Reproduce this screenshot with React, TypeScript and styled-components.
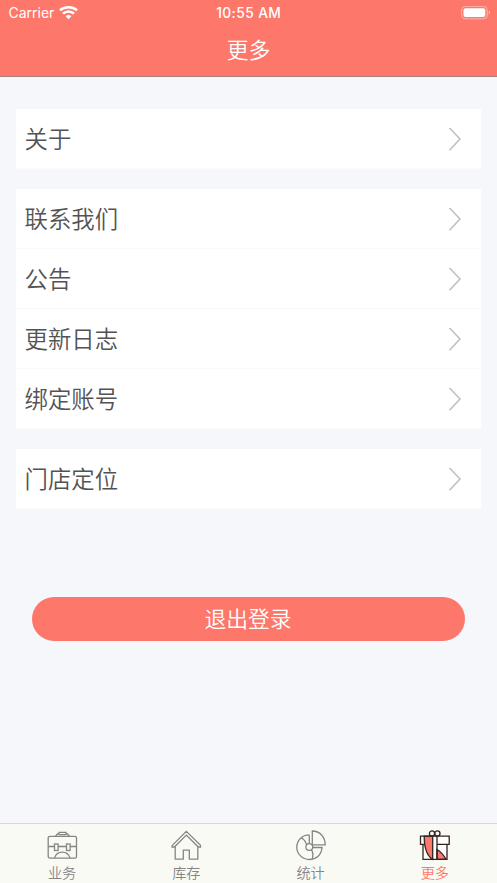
import React from "react";
import styled, { createGlobalStyle } from "styled-components";

const Global = createGlobalStyle`
  * { box-sizing: border-box; }
  body { margin: 0; background: #f5f7fb; font-family: Inter, "Noto Sans CJK SC", sans-serif; }
`;

const Screen = styled.div`
  height: 883px;
  display: flex;
  flex-direction: column;
  background: #f5f7fb;
  overflow: hidden;
`;

const Header = styled.header`
  height: 77px;
  flex: none;
  background: #fe776b;
  border-bottom: 1px solid #a8827f;
  color: #fff;
`;

const StatusBar = styled.div`
  height: 26px;
  display: grid;
  grid-template-columns: 1fr auto 1fr;
  align-items: center;
  padding: 0 6px 0 8.5px;
  font-size: 14px;
  line-height: 26px;
`;

const Carrier = styled.div`
  display: flex;
  align-items: center;
  gap: 5px;
`;

const Time = styled.div`
  margin-right: 2px;
  font-size: 13.8px;
  font-weight: 550;
  letter-spacing: 0.4px;
`;

const Battery = styled.svg`
  justify-self: end;
  display: block;
`;

const Title = styled.h1`
  margin: 0;
  height: 50px;
  font-size: 21.8px;
  font-weight: 350;
  font-family: "Noto Sans CJK SC", sans-serif;
  line-height: 46px;
  text-align: center;
`;

const Content = styled.main`
  flex: 1;
  display: flex;
  flex-direction: column;
  gap: 20px;
  padding: 32px 16px 0;
`;

const Group = styled.section`
  background: #fff;
`;

const Row = styled.div`
  height: 60px;
  display: flex;
  align-items: center;
  justify-content: space-between;
  padding: 0 19px 0 8.5px;
  font-family: "Noto Sans CJK SC", sans-serif;
  font-size: 23.4px;
  font-weight: 350;
  line-height: 60px;
  color: #535353;
  border-bottom: 1px solid #f9f9fa;

  &:last-child { border-bottom-color: #fafbfd; }
`;

const RowLabel = styled.span`
  margin-top: -2px;
`;

const Logout = styled.button`
  height: 44px;
  margin: 67.5px 16px 0;
  border: 0;
  border-radius: 22px;
  background: #fe776b;
  color: #fff;
  font-family: "Noto Sans CJK SC", sans-serif;
  font-size: 21.8px;
  font-weight: 350;
  line-height: 42px;
  padding: 0 1px 2px 0;
`;

const TabBar = styled.nav`
  height: 60px;
  flex: none;
  display: grid;
  grid-template-columns: repeat(4, 1fr);
  background: #fafaf5;
  border-top: 1px solid #d5d7df;
`;

const Tab = styled.div<{ $active?: boolean }>`
  display: flex;
  flex-direction: column;
  align-items: center;
  padding-top: 6px;
  color: ${(p) => (p.$active ? "#fe776b" : "#858585")};
`;

const TabIcon = styled.svg`
  width: 32px;
  height: 32px;
  flex: none;
  fill: none;
  stroke: #858585;
  stroke-width: 1.3;
`;

const TabLabel = styled.span`
  font-family: "Noto Sans CJK SC", sans-serif;
  font-size: 14.2px;
  font-weight: 350;
  line-height: 20px;
`;

const Chevron = () => (
  <svg width="14" height="26" viewBox="0 0 14 26" fill="none" stroke="#c0c0c2" strokeWidth="1.6">
    <path d="M1.5 2L12 13L1.5 24.3" />
  </svg>
);

const Wifi = () => (
  <svg width="19" height="14" viewBox="0 0 19 14" fill="none" stroke="#fff" strokeWidth="2.5">
    <path d="M1 4.3C5.6 .3 13.4 .3 18 4.3" />
    <path d="M4 7.7C7 4.8 12 4.8 15 7.7" />
    <path d="M6.6 10.3C8.2 8.7 10.8 8.7 12.4 10.3L9.5 13.2Z" fill="#fff" stroke="none" />
  </svg>
);

const Briefcase = () => (
  <TabIcon viewBox="0 0 32 32">
    <rect x="2.2" y="6.3" width="28.3" height="21.8" rx="1.6" />
    <path d="M9.5 6.3L11.5 4H13V2.4H20V4H21.5L23.5 6.3M13 4.7H20M2.2 16.5H8.5M12 16.5H20.5M24 16.5H30.5" />
    <rect x="8.5" y="14" width="3.6" height="6.5" />
    <rect x="20.5" y="14" width="3.6" height="6.5" />
    <path d="M8.5 28.1C9.5 24.6 12.5 22.1 16.3 22.1S23 24.6 24 28.1" />
  </TabIcon>
);

const House = () => (
  <TabIcon viewBox="0 0 32 32">
    <path d="M2.1 15.6L16.3 1.3L30.5 15.3V17H28.3L16.3 5.1L4.4 17H2.1ZM5.2 16.3V29.2H13.3V20.2H19.3V29.2H27.8V16.3" />
  </TabIcon>
);

const PieIcon = () => (
  <TabIcon viewBox="0 0 32 32">
    <path d="M17.3 1C24.8 1 30.2 7 30.2 14.8H17.3ZM14.3 4.9C7.2 4.9 1.8 10.5 1.8 17.2S7.4 29.5 14.3 29.5S26.6 24.7 27 17.5H17.6" />
    <circle cx="14.3" cy="17" r="3.4" />
    <path d="M14.3 4.9V13.6M6.2 7.9C9 9.2 10.8 11.7 11.6 14.9M16.4 19.7C18.3 22.7 18.2 26.2 17 29.2" />
  </TabIcon>
);

const Gift = () => (
  <TabIcon viewBox="0 0 32 32">
    <g stroke="#33231f" strokeWidth="1.3">
      <path d="M1.5 6.2H30.2V14.3H28V29.4H4V14.3H1.5Z" fill="#fff" stroke="none" />
      <path d="M5.2 6.2H13.7V29.4C8.3 26 5.2 18 5.2 6.2Z" fill="#fe776b" />
      <path d="M18 19.5C21 21.2 24.8 25.3 27 29.4H18Z" fill="#fe776b" />
      <path d="M5.2 6.2H30.2V14.3H18M5.5 14.3H1.5V6.2H5.2M4 14.3V29.4H28V14.3M18 6.2V29.4" />
      <circle cx="13" cy="3.5" r="2.6" />
      <circle cx="18.4" cy="3.5" r="2.6" />
    </g>
  </TabIcon>
);

const groups = [["关于"], ["联系我们", "公告", "更新日志", "绑定账号"], ["门店定位"]];
const tabs = [
  { label: "业务", Icon: Briefcase },
  { label: "库存", Icon: House },
  { label: "统计", Icon: PieIcon },
  { label: "更多", Icon: Gift, active: true },
];

export default function App() {
  return (
    <Screen>
      <Global />
      <Header>
        <StatusBar>
          <Carrier>Carrier <Wifi /></Carrier>
          <Time>10:55 AM</Time>
          <Battery width="30" height="14" viewBox="0 0 30 14">
            <rect x=".7" y=".4" width="25.5" height="12.4" rx="3.6" fill="none" stroke="#fff" strokeOpacity=".45" />
            <rect x="2.5" y="2.2" width="21.8" height="8.8" rx="2" fill="#fff" />
            <path d="M27.8 4.6C29.4 5.4 29.4 7.8 27.8 8.6Z" fill="#fff" fillOpacity=".5" />
          </Battery>
        </StatusBar>
        <Title>更多</Title>
      </Header>
      <Content>
        {groups.map((rows) => (
          <Group key={rows[0]}>
            {rows.map((label) => (
              <Row key={label}><RowLabel>{label}</RowLabel><Chevron /></Row>
            ))}
          </Group>
        ))}
        <Logout>退出登录</Logout>
      </Content>
      <TabBar>
        {tabs.map(({ label, Icon, active }) => (
          <Tab key={label} $active={active}>
            <Icon />
            <TabLabel>{label}</TabLabel>
          </Tab>
        ))}
      </TabBar>
    </Screen>
  );
}
